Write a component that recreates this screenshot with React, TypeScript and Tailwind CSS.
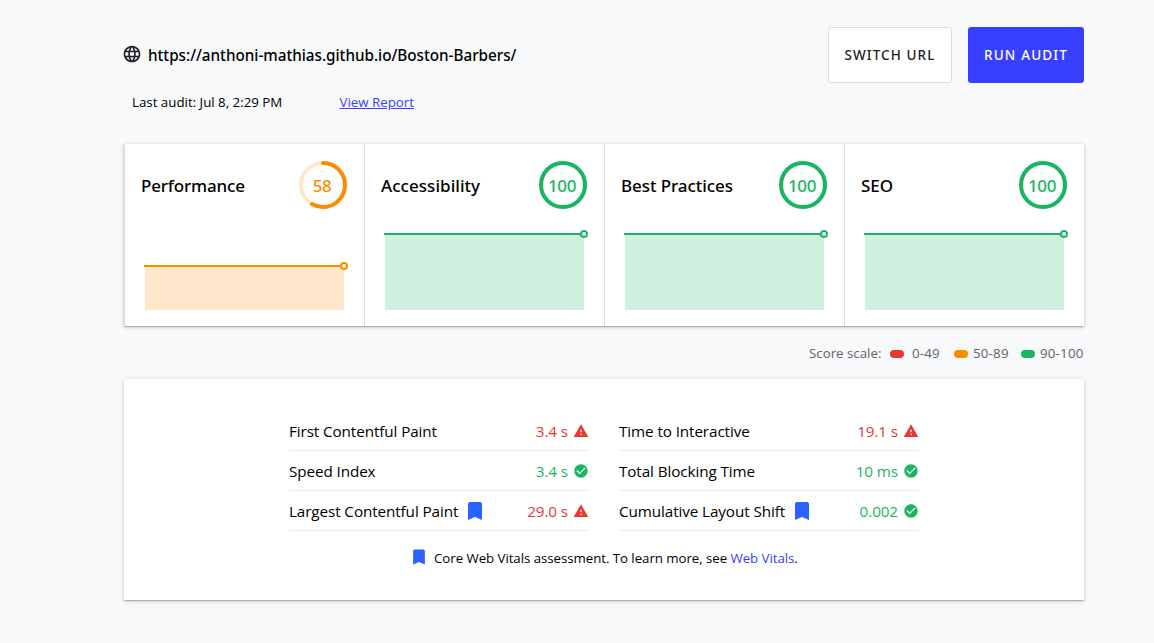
type Tone = "orange" | "green";

const STROKE: Record<Tone, string> = { orange: "#fb8c00", green: "#18b663" };
const TINT: Record<Tone, string> = { orange: "#fee7cb", green: "#d0f0df" };

function Gauge({ score, tone }: { score: number; tone: Tone }) {
  const length = 2 * Math.PI * 22;
  return (
    <div className="grid size-12 place-items-center">
      <svg viewBox="0 0 48 48" className="col-start-1 row-start-1 size-12 -rotate-90" fill="none" strokeWidth="4">
        <circle cx="24" cy="24" r="22" stroke={TINT[tone]} />
        <circle
          cx="24"
          cy="24"
          r="22"
          stroke={STROKE[tone]}
          strokeLinecap="round"
          strokeDasharray={`${(length * score) / 100} ${length}`}
        />
      </svg>
      <span
        className={`col-start-1 row-start-1 pr-0.5 pt-px text-[17px] leading-6 font-medium tracking-[-0.4px] ${
          tone === "orange" ? "text-[#fb8c00]" : "text-[#18b663]"
        }`}
      >
        {score}
      </span>
    </div>
  );
}

function Sparkline({ score, tone }: { score: number; tone: Tone }) {
  const y = 81 - Math.round(score * 0.76);
  return (
    <svg width="208" height="82" viewBox="0 0 208 82" className="block">
      <rect x="1" y={y} width="199" height={81 - y} fill={TINT[tone]} />
      <path d={`M0 ${y}H200`} stroke={STROKE[tone]} strokeWidth="2" />
      <circle cx="200" cy={y} r="3" fill="#fff" stroke={STROKE[tone]} strokeWidth="2" />
    </svg>
  );
}

function ScoreCard({ title, score, tone, spacing }: { title: string; score: number; tone: Tone; spacing: string }) {
  return (
    <section className="h-[182px] border-l border-[#dadce0] pt-[17px]">
      <div className="flex h-12 items-center justify-between pr-[17px] pl-4">
        <h2 className={`pt-0.5 text-[17px] leading-6 font-medium whitespace-nowrap ${spacing}`}>{title}</h2>
        <Gauge score={score} tone={tone} />
      </div>
      <div className="flex pt-5 pl-[19px]">
        <Sparkline score={score} tone={tone} />
      </div>
    </section>
  );
}

function Bookmark({ className }: { className: string }) {
  return (
    <svg viewBox="0 0 24 24" className={className} fill="#2962ff">
      <path d="M17 3H7c-1.1 0-1.99.9-1.99 2L5 21l7-3 7 3V5c0-1.1-.9-2-2-2z" />
    </svg>
  );
}

function StatusIcon({ good }: { good: boolean }) {
  return (
    <svg viewBox="0 0 24 24" className="mr-[0.5px] ml-[4.5px] size-4" fill={good ? "#18b663" : "#e53935"}>
      {good ? (
        <path d="M12 2C6.48 2 2 6.48 2 12s4.48 10 10 10 10-4.48 10-10S17.52 2 12 2zm-2 15l-5-5 1.41-1.41L10 14.17l7.59-7.59L19 8l-9 9z" />
      ) : (
        <path d="M1 21h22L12 2 1 21zm12-3h-2v-2h2v2zm0-4h-2v-4h2v4z" />
      )}
    </svg>
  );
}

interface Metric {
  name: string;
  value: string;
  good: boolean;
  core?: boolean;
}

const LEFT: Metric[] = [
  { name: "First Contentful Paint", value: "3.4 s", good: false },
  { name: "Speed Index", value: "3.4 s", good: true },
  { name: "Largest Contentful Paint", value: "29.0 s", good: false, core: true },
];
const RIGHT: Metric[] = [
  { name: "Time to Interactive", value: "19.1 s", good: false },
  { name: "Total Blocking Time", value: "10 ms", good: true },
  { name: "Cumulative Layout Shift", value: "0.002", good: true, core: true },
];

function MetricList({ items }: { items: Metric[] }) {
  return (
    <ul className="w-[300px]">
      {items.map((m) => (
        <li
          key={m.name}
          className="flex h-10 items-center border-b border-[#e8eaed] text-[15.25px] leading-6 tracking-[-0.1px] whitespace-nowrap"
        >
          <span className="pt-px">{m.name}</span>
          {m.core && <Bookmark className="ml-[5px] size-6" />}
          <span className={`ml-auto pt-px ${m.good ? "text-[#18b663]" : "text-[#e53935]"}`}>{m.value}</span>
          <StatusIcon good={m.good} />
        </li>
      ))}
    </ul>
  );
}

export default function App() {
  return (
    <div className="h-[643px] overflow-hidden bg-[#f8f9fb] pt-[27px] pl-[124px] font-['Open_Sans','Noto_Sans',sans-serif] text-black [&_.font-medium]:font-['Noto_Sans',sans-serif]">
      <main className="w-[960px]">
        <header className="flex h-14 items-center">
          <svg viewBox="0 0 24 24" className="-ml-0.5 mb-0.5 size-5 text-[#202124]" fill="currentColor">
            <path d="M11.99 2C6.47 2 2 6.48 2 12s4.47 10 9.99 10C17.52 22 22 17.52 22 12S17.52 2 11.99 2zm6.93 6h-2.95a15.65 15.65 0 0 0-1.38-3.56A8.03 8.03 0 0 1 18.92 8zM12 4.04c.83 1.2 1.48 2.53 1.91 3.96h-3.82c.43-1.43 1.08-2.76 1.91-3.96zM4.26 14C4.1 13.36 4 12.69 4 12s.1-1.36.26-2h3.38c-.08.66-.14 1.32-.14 2s.06 1.34.14 2H4.26zm.82 2h2.95c.32 1.25.78 2.45 1.38 3.56A7.987 7.987 0 0 1 5.08 16zm2.95-8H5.08a7.987 7.987 0 0 1 4.33-3.56A15.65 15.65 0 0 0 8.03 8zM12 19.96c-.83-1.2-1.48-2.53-1.91-3.96h3.82c-.43 1.43-1.08 2.76-1.91 3.96zM14.34 14H9.66c-.09-.66-.16-1.32-.16-2s.07-1.35.16-2h4.68c.09.65.16 1.32.16 2s-.07 1.34-.16 2zm.25 5.56c.6-1.11 1.06-2.31 1.38-3.56h2.95a8.03 8.03 0 0 1-4.33 3.56zM16.36 14c.08-.66.14-1.32.14-2s-.06-1.34-.14-2h3.38c.16.64.26 1.31.26 2s-.1 1.36-.26 2h-3.38z" />
          </svg>
          <h1 className="ml-1.5 text-[15.25px] leading-6 font-medium tracking-[-0.02px]">
            https://anthoni-mathias.github.io/Boston-Barbers/
          </h1>
          <button className="ml-auto h-14 w-[124px] rounded-[3px] border border-[#dadce0] bg-white text-[13.5px] font-medium tracking-[1.1px] text-[#202124]">
            SWITCH URL
          </button>
          <button className="ml-4 h-14 w-[116px] rounded-[3px] bg-[#3740ff] text-[13.5px] font-medium tracking-[1.15px] text-white">
            RUN AUDIT
          </button>
        </header>

        <div className="mt-[9px] flex h-5 items-center pl-2 text-[13.3px] leading-5">
          <p className="w-[207.5px]">Last audit: Jul 8, 2:29 PM</p>
          <a className="text-[#3740ff] underline">View Report</a>
        </div>

        <div className="mt-8 grid grid-cols-4 bg-white shadow-[0_2px_1px_-1px_rgba(0,0,0,0.12),0_1px_2px_0_rgba(0,0,0,0.16),0_1px_5px_0_rgba(0,0,0,0.14)]">
          <ScoreCard title="Performance" score={58} tone="orange" spacing="tracking-[-0.15px]" />
          <ScoreCard title="Accessibility" score={100} tone="green" spacing="tracking-[0.05px]" />
          <ScoreCard title="Best Practices" score={100} tone="green" spacing="tracking-[-0.07px]" />
          <ScoreCard title="SEO" score={100} tone="green" spacing="tracking-normal" />
        </div>

        <div className="mt-[17px] flex h-5 items-center justify-end text-[13.3px] leading-5 text-[#5f6368]">
          <span className="w-[81px]">Score scale:</span>
          <i className="mt-0.5 mr-2 h-2 w-3.5 rounded-full bg-[#e53935]" />
          <span className="w-[42px] tracking-[0.2px]">0-49</span>
          <i className="mt-0.5 mr-[5px] h-2 w-3.5 rounded-full bg-[#fb8c00]" />
          <span className="w-12 tracking-[0.2px]">50-89</span>
          <i className="mt-0.5 mr-[5px] h-2 w-3.5 rounded-full bg-[#18b663]" />
          <span className="w-11 tracking-[0.2px]">90-100</span>
        </div>

        <section className="mt-4 h-[221px] bg-white pt-8 shadow-[0_2px_1px_-1px_rgba(0,0,0,0.12),0_1px_2px_0_rgba(0,0,0,0.16),0_1px_5px_0_rgba(0,0,0,0.14)]">
          <div className="flex gap-[30px] pl-[165px]">
            <MetricList items={LEFT} />
            <MetricList items={RIGHT} />
          </div>
          <div className="flex h-14 items-center pl-[285px] text-[13.3px] leading-5 tracking-[-0.06px] whitespace-nowrap">
            <Bookmark className="mb-1 size-5" />
            <p className="mb-0.5 ml-[5px]">
              Core Web Vitals assessment. To learn more, see <a className="text-[#3740ff]">Web Vitals</a>.
            </p>
          </div>
        </section>
      </main>
    </div>
  );
}
